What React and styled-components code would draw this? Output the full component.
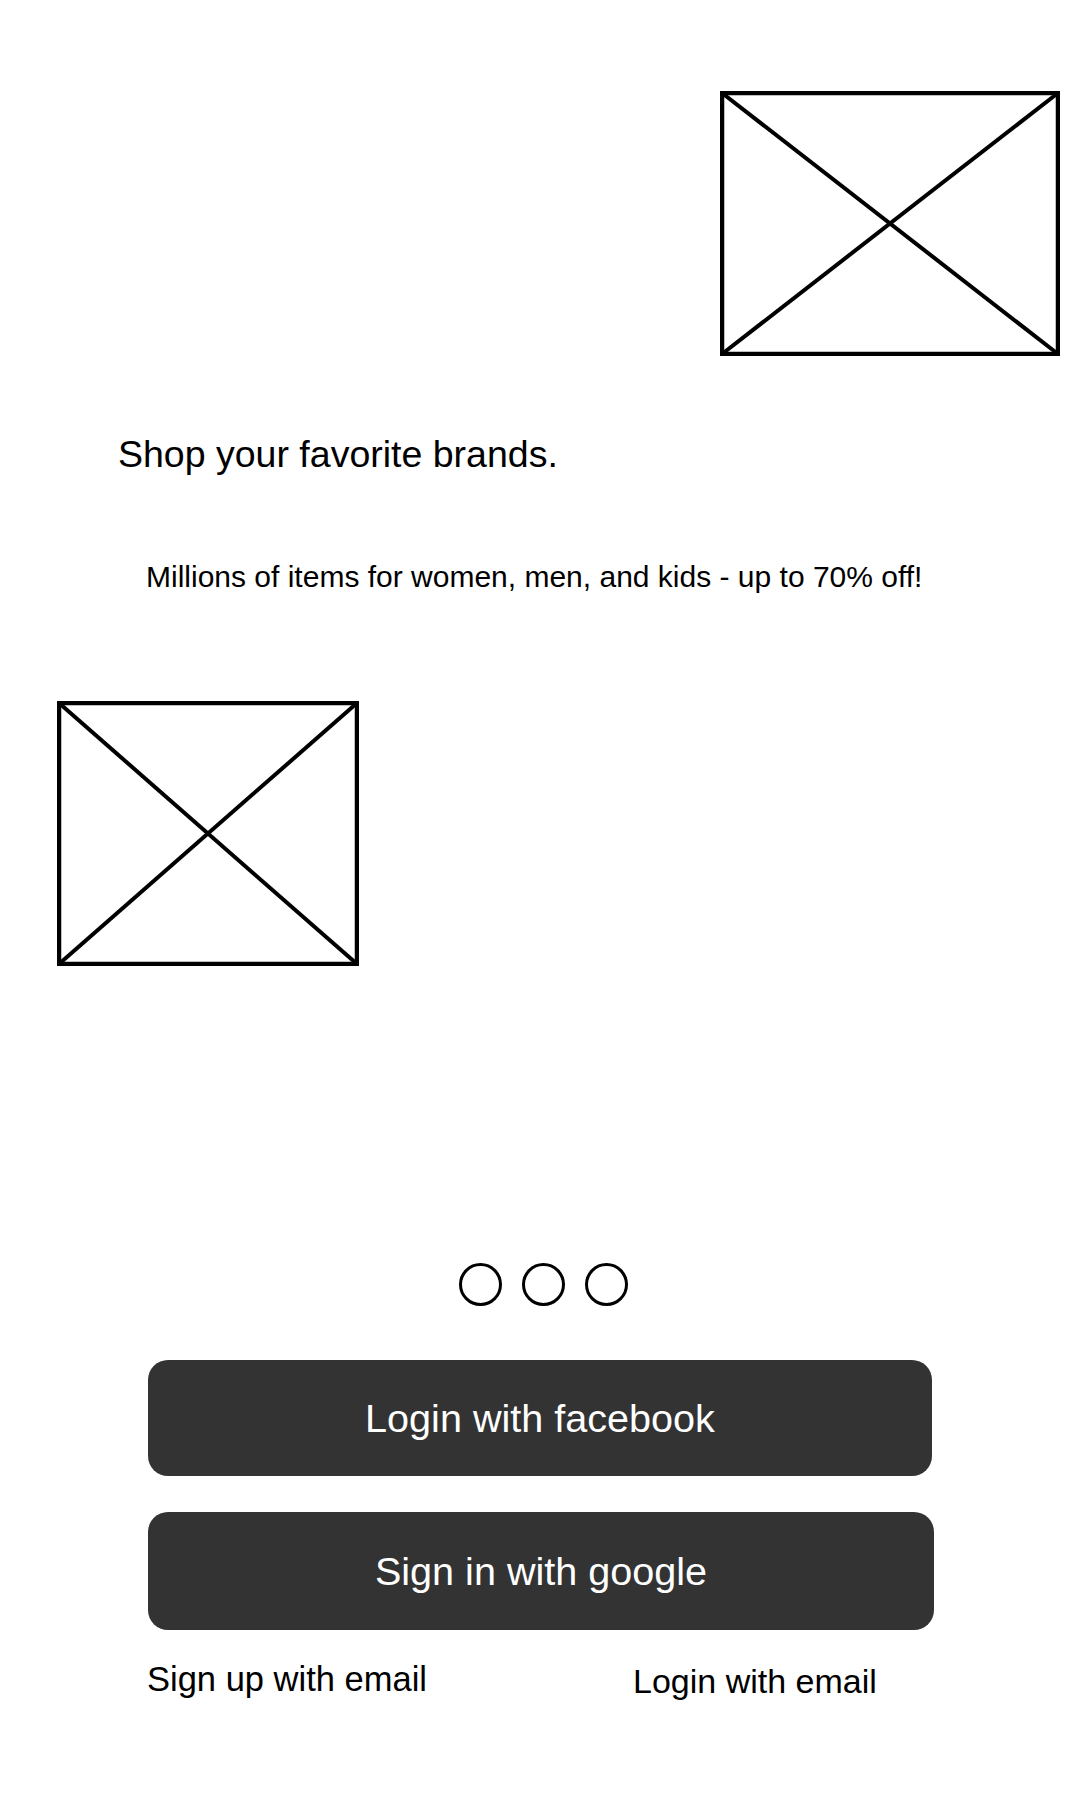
import styled, { createGlobalStyle } from 'styled-components';

const GlobalStyle = createGlobalStyle`
  body {
    margin: 0;
    background: #fff;
    font-family: "Liberation Sans", Arial, sans-serif;
    color: #000;
  }
`;

const Page = styled.div`
  width: 1080px;
  min-height: 1800px;
  display: flex;
  flex-direction: column;
`;

const HeroRow = styled.div`
  display: flex;
  justify-content: ${(p) => (p.$right ? 'flex-end' : 'flex-start')};
  padding: ${(p) => p.$pad};
`;

const Heading = styled.h1`
  margin: 77px 0 0 118px;
  font-size: 37.5px;
  line-height: 43px;
  font-weight: 400;
`;

const Tagline = styled.p`
  margin: 84px 0 0 146px;
  font-size: 30px;
  line-height: 34px;
`;

const Footer = styled.div`
  display: flex;
  flex-direction: column;
  padding: 297px 146px 0 148px;
`;

const Dots = styled.div`
  display: flex;
  justify-content: center;
  gap: 20px;
  padding-left: 5px;
`;

const Dot = styled.span`
  width: 43px;
  height: 43px;
  box-sizing: border-box;
  border: 3px solid #000;
  border-radius: 50%;
  background: ${(p) => (p.$active ? '#000' : 'transparent')};
`;

const Buttons = styled.div`
  display: flex;
  flex-direction: column;
  gap: 36px;
  margin-top: 54px;
`;

const AuthButton = styled.button`
  display: flex;
  align-items: center;
  justify-content: center;
  width: ${(p) => p.$w}px;
  height: ${(p) => p.$h}px;
  border: none;
  border-radius: 20px;
  background: #333333;
  color: #fff;
  font-family: "Liberation Sans", Arial, sans-serif;
  font-size: 39.6px;
  cursor: pointer;
`;

const Links = styled.div`
  display: grid;
  grid-template-columns: 486px auto;
  margin-top: 30px;
  margin-left: -1px;
`;

const TextLink = styled.a`
  font-size: ${(p) => p.$size}px;
  line-height: 39px;
  color: #000;
  text-decoration: none;
  margin-top: ${(p) => p.$drop || 0}px;
  cursor: pointer;
`;

const Placeholder = ({ w, h }) => (
  <svg width={w} height={h} viewBox={`0 0 ${w} ${h}`}>
    <rect x="2" y="2" width={w - 4} height={h - 4} fill="none" stroke="#000" strokeWidth="4.5" />
    <line x1="2" y1="2" x2={w - 2} y2={h - 2} stroke="#000" strokeWidth="4" />
    <line x1={w - 2} y1="2" x2="2" y2={h - 2} stroke="#000" strokeWidth="4" />
  </svg>
);

const App = () => {
  return (
    <>
      <GlobalStyle />
      <Page>
        <HeroRow $right $pad="91px 20px 0 0">
          <Placeholder w={340} h={265} />
        </HeroRow>
        <Heading>Shop your favorite brands.</Heading>
        <Tagline>Millions of items for women, men, and kids - up to 70% off!</Tagline>
        <HeroRow $pad="107px 0 0 57px">
          <Placeholder w={302} h={265} />
        </HeroRow>
        <Footer>
          <Dots>
            <Dot />
            <Dot />
            <Dot />
          </Dots>
          <Buttons>
            <AuthButton type="button" $w={784} $h={116}>Login with facebook</AuthButton>
            <AuthButton type="button" $w={786} $h={118}>Sign in with google</AuthButton>
          </Buttons>
          <Links>
            <TextLink $size={34.5}>Sign up with email</TextLink>
            <TextLink $size={34} $drop={2}>Login with email</TextLink>
          </Links>
        </Footer>
      </Page>
    </>
  );
};

export default App;
